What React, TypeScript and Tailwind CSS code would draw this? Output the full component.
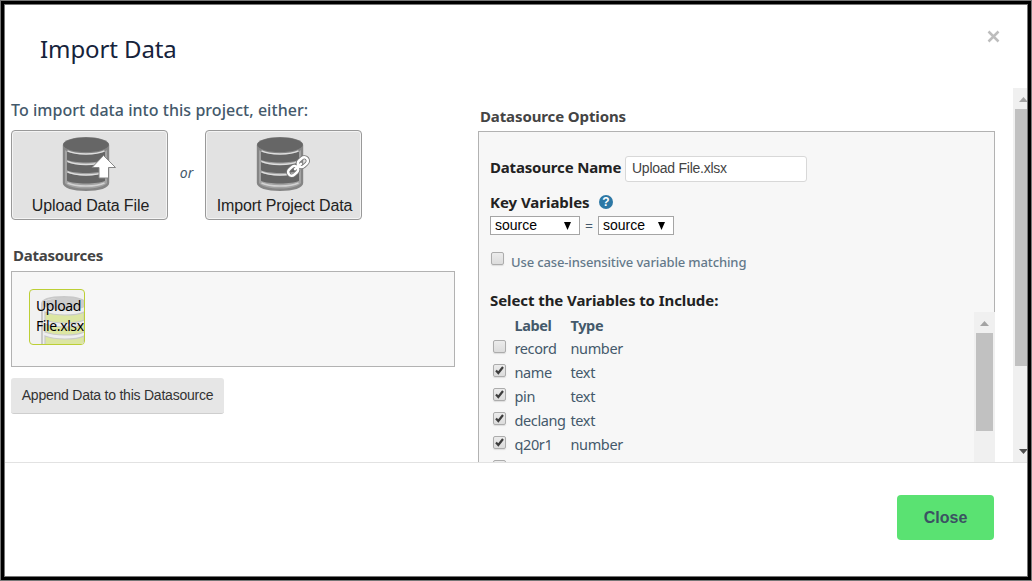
import React from 'react';

const ui = "font-['Noto_Sans','Open_Sans',sans-serif]";
const arial = "font-['Liberation_Sans',Arial,sans-serif]";

function Database({ kind }: { kind: 'upload' | 'link' }) {
  return (
    <svg width="56" height="56" viewBox="0 0 56 56" className="block">
      <path d="M.8 9C.8 4 12 1 24 1s23.200 3 23.200 8v38c0 5-10 8-23.200 8S.8 52 .8 47Z" fill="#858585" />
      <path d="M3 14c4 3.500 12 5 21 5s17-1.500 21-5v33c-2 3.500-11 5.500-21 5.500S5 50.500 3 47Z" fill="#a2a2a2" />
      <ellipse cx="24" cy="8.800" rx="22.800" ry="7.300" fill="#666" />
      {[15.5, 26, 36.5].map((y) => (
        <g key={y}>
          <path d={`M5 ${y}c4 2 10.500 3 19 3s15-1 19-3v8.300c-4 1.800-10.500 2.700-19 2.700S9 ${y + 10.1} 5 ${y + 8.3}Z`} fill="#656565" />
          <path d={`M5.500 ${y - 0.6}c4 2 10.500 3 18.500 3s14.500-1 18.500-3`} fill="none" stroke="#dedede" strokeWidth="1.500" />
        </g>
      ))}
      <path d="M5.500 47c4 2 10.500 3 18.500 3s14.500-1 18.500-3" fill="none" stroke="#d2d2d2" strokeWidth="1.400" />
      {kind === 'upload' ? (
        <path d="M41.500 19.500 53.500 31.500H46.500V42H37V31.500H30Z" fill="#fff" stroke="#858585" strokeWidth="1" />
      ) : (
        <g transform="translate(42 30.500) rotate(-42)" fill="none">
          <g stroke="#777" strokeWidth="4.200">
            <rect x="-12" y="-3.600" width="11" height="7.200" rx="3.600" />
            <rect x="1" y="-3.600" width="11" height="7.200" rx="3.600" />
            <path d="M-5 0H5" />
          </g>
          <g stroke="#fff" strokeWidth="2.500">
            <rect x="-12" y="-3.600" width="11" height="7.200" rx="3.600" />
            <rect x="1" y="-3.600" width="11" height="7.200" rx="3.600" />
            <path d="M-4 0H4" strokeLinecap="round" />
          </g>
        </g>
      )}
    </svg>
  );
}

function SourceButton({ kind, children }: { kind: 'upload' | 'link'; children: React.ReactNode }) {
  return (
    <button className="flex h-[90px] w-[157px] flex-col items-center rounded-[4px] border border-[#999] bg-[#e2e2e2] pt-[5px] shadow-[inset_0_0_0_1px_#f4f4f4]">
      <Database kind={kind} />
      <span className={`${arial} mt-[4px] whitespace-nowrap pl-[2px] text-[16px] leading-[20px] tracking-[-0.11px] text-[#222]`}>{children}</span>
    </button>
  );
}

function Checkbox({ checked = false }: { checked?: boolean }) {
  return (
    <span className="block h-[13px] w-[13px] shrink-0 rounded-[2px] border border-[#acacac] bg-linear-to-b from-[#ececec] to-[#dcdcdc] shadow-[0_1px_1px_#ddd]">
      {checked && (
        <svg width="11" height="11" viewBox="0 0 11 11" className="block">
          <path d="M2 5.600 4.300 8 9 2" fill="none" stroke="#3d3d3d" strokeWidth="2.200" />
        </svg>
      )}
    </span>
  );
}

function Picker({ width }: { width: string }) {
  return (
    <div className={`${arial} ${width} flex h-[19px] items-center justify-between border border-[#a5a5a5] bg-white pl-1 pr-[8px] text-[14px] leading-[17px] text-black`}>
      <span>source</span>
      <svg width="7" height="8" viewBox="0 0 7 8"><path d="M0 0h7L3.500 8Z" fill="#000" /></svg>
    </div>
  );
}

const rows = [
  { label: 'record', type: 'number', on: false },
  { label: 'name', type: 'text', on: true },
  { label: 'pin', type: 'text', on: true },
  { label: 'declang', type: 'text', on: true },
  { label: 'q20r1', type: 'number', on: true },
];

function Left() {
  return (
    <section className="ml-[6px] w-[444px] shrink-0">
      <h2 className={`${ui} mt-[10px] h-6 whitespace-nowrap text-[16px] font-medium leading-6 tracking-[0.04px] text-[#44596b]`}>To import data into this project, either:</h2>
      <div className="mt-2 flex items-center">
        <SourceButton kind="upload">Upload Data File</SourceButton>
        <span className={`${ui} -mt-[5px] w-[37px] text-center text-[14px] italic leading-5 text-[#44596b]`}>or</span>
        <SourceButton kind="link">Import Project Data</SourceButton>
      </div>
      <h3 className={`${ui} ml-[2px] mt-[24px] h-[22px] text-[15px] font-bold leading-[22px] tracking-[-0.25px] text-[#444]`}>Datasources</h3>
      <div className="mt-[5px] h-[96px] border border-[#b2b2b2] bg-[#f7f7f7] pl-[17px] pt-[17px]">
        <div className="relative h-[56px] w-[56px] overflow-hidden rounded-[4px] border border-[#bccf35] bg-[#f1f1f1] pl-[6px] pt-[6px]">
          <svg className="absolute left-[10px] top-[6px]" width="46" height="50" viewBox="0 0 46 50">
            <path d="M2 8C2 3 11 1 24 1s22 3 22 8v50H2Z" fill="#eee" stroke="#c9c9c9" strokeWidth="2" />
            <ellipse cx="25" cy="8" rx="22" ry="6.500" fill="#ccc" />
            {[17, 29, 41].map((y) => (
              <path key={y} d={`M5 ${y - 1}c5 2 12 3 20 3s15-1 19-3v8c-4 2-11 3-19 3S10 ${y + 9} 5 ${y + 7}Z`} fill="#dce6a3" stroke="#c9c9c9" strokeWidth="1.200" />
            ))}
          </svg>
          <div className={`${ui} relative text-[14px] leading-[20px] tracking-[-0.4px] text-black`}>Upload<br />File.xlsx</div>
        </div>
      </div>
      <button className={`${arial} mt-[11px] h-[36px] w-[213px] whitespace-nowrap rounded-[3px] border-b border-[#cecece] bg-[#e6e6e6] pb-px text-[14px] leading-[33px] tracking-[-0.23px] text-[#333]`}>Append Data to this Datasource</button>
    </section>
  );
}

function Options() {
  return (
    <section className="ml-[23px] w-[517px] shrink-0">
      <h3 className={`${ui} ml-[2px] mt-[17px] h-[22px] whitespace-nowrap text-[15px] font-bold leading-[22px] tracking-[-0.12px] text-[#444]`}>Datasource Options</h3>
      <div className="mt-[4px] h-[350px] border border-[#b2b2b2] bg-[#f7f7f7] pl-[11px] pt-[24px]">
        <div className="flex h-[26px] items-center">
          <label className={`${ui} -mt-[4px] w-[135px] whitespace-nowrap text-[15px] font-bold leading-[22px] tracking-[-0.18px] text-[#222]`}>Datasource Name</label>
          <div className={`${arial} h-[26px] w-[182px] rounded-[3px] border border-[#d8d8d8] bg-white pl-[6px] text-[14px] leading-[22px] tracking-[-0.25px] text-[#444]`}>Upload File.xlsx</div>
        </div>
        <div className="mt-[9px] flex h-[22px] items-center">
          <span className={`${ui} w-[109px] whitespace-nowrap text-[15px] font-bold leading-[22px] tracking-[-0.04px] text-[#222]`}>Key Variables</span>
          <span className={`${arial} h-[14px] w-[14px] rounded-full bg-[#2d78a5] text-center text-[12px] font-bold leading-[14px] text-white`}>?</span>
        </div>
        <div className="mt-[3px] flex items-center">
          <Picker width="w-[90px]" />
          <span className={`${ui} w-[18px] text-center text-[14px] leading-[19px] text-[#44596b]`}>=</span>
          <Picker width="w-[76px]" />
        </div>
        <div className="mt-[16px] flex h-[22px] pl-px">
          <div className="pt-[1px]"><Checkbox /></div>
          <span className={`${ui} ml-[7px] whitespace-nowrap text-[13px] font-medium leading-[22px] tracking-[-0.13px] text-[#64798a]`}>Use case-insensitive variable matching</span>
        </div>
        <h4 className={`${ui} mt-[16px] h-[22px] whitespace-nowrap text-[15px] font-bold leading-[22px] tracking-[-0.08px] text-[#222]`}>Select the Variables to Include:</h4>
        <div className="mt-px flex justify-between">
          <div className={`${ui} pt-px text-[14.5px] leading-[23px] tracking-[-0.38px] text-[#44596b]`}>
            <div className="grid h-6 grid-cols-[24.500px_56px_80px] text-[14.5px] font-bold leading-6"><span /><span>Label</span><span>Type</span></div>
            {rows.map((r) => (
              <div key={r.label} className="grid h-6 grid-cols-[24.500px_56px_80px]">
                <span className="pl-[3px] pt-[3px]"><Checkbox checked={r.on} /></span><span>{r.label}</span><span>{r.type}</span>
              </div>
            ))}
            <div className="pl-[3px] pt-[3px]"><Checkbox /></div>
          </div>
          <div className="-mr-px h-[170px] w-[21px] bg-[#f0f0f0] pt-[9px]">
            <svg width="9" height="5" viewBox="0 0 9 5" className="mx-auto block"><path d="M4.500 0 9 5H0Z" fill="#a3a3a3" /></svg>
            <div className="mx-auto mt-[7px] h-[98px] w-[17px] bg-[#c1c1c1]" />
          </div>
        </div>
      </div>
    </section>
  );
}

export default function App() {
  return (
    <div className="h-[581px] w-[1032px] overflow-hidden border border-[#777] bg-white">
      <div className="h-full border-[3px] border-black">
        <main className="flex h-full flex-col border border-[#777]">
          <header className="flex h-[83px] shrink-0 justify-between pl-[35px] pr-[27px]">
            <h1 className={`${ui} mt-[27px] whitespace-nowrap text-[24px] leading-[34px] tracking-[-0.1px] text-[#16233b]`}>Import Data</h1>
            <svg className="mt-[25px]" width="13" height="13" viewBox="0 0 13 13"><path d="m1.500 1.500 10 10m0-10-10 10" stroke="#bdbdbd" strokeWidth="2.500" /></svg>
          </header>
          <div className="flex h-[375px] shrink-0 overflow-hidden border-b border-[#e2e2e2]">
            <Left />
            <Options />
            <div className="ml-[18px] flex w-[14px] shrink-0 flex-col overflow-hidden bg-[#f0f0f0] pt-[9px]">
              <svg width="9" height="5" viewBox="0 0 9 5" className="ml-[6px] block shrink-0"><path d="M4.500 0 9 5H0Z" fill="#a3a3a3" /></svg>
              <div className="ml-[2px] mt-[7px] h-[257px] bg-[#c1c1c1]" />
              <svg width="9" height="5" viewBox="0 0 9 5" className="mb-[8px] ml-[6px] mt-auto block shrink-0"><path d="M0 0h9L4.500 5Z" fill="#505050" /></svg>
            </div>
          </div>
          <footer className="flex flex-1 justify-end pr-[33px] pt-[32px]">
            <button className={`${arial} h-[45px] w-[97px] rounded-[4px] bg-[#5ae272] text-[16px] font-bold leading-[45px] text-[#3b5262]`}>Close</button>
          </footer>
        </main>
      </div>
    </div>
  );
}
